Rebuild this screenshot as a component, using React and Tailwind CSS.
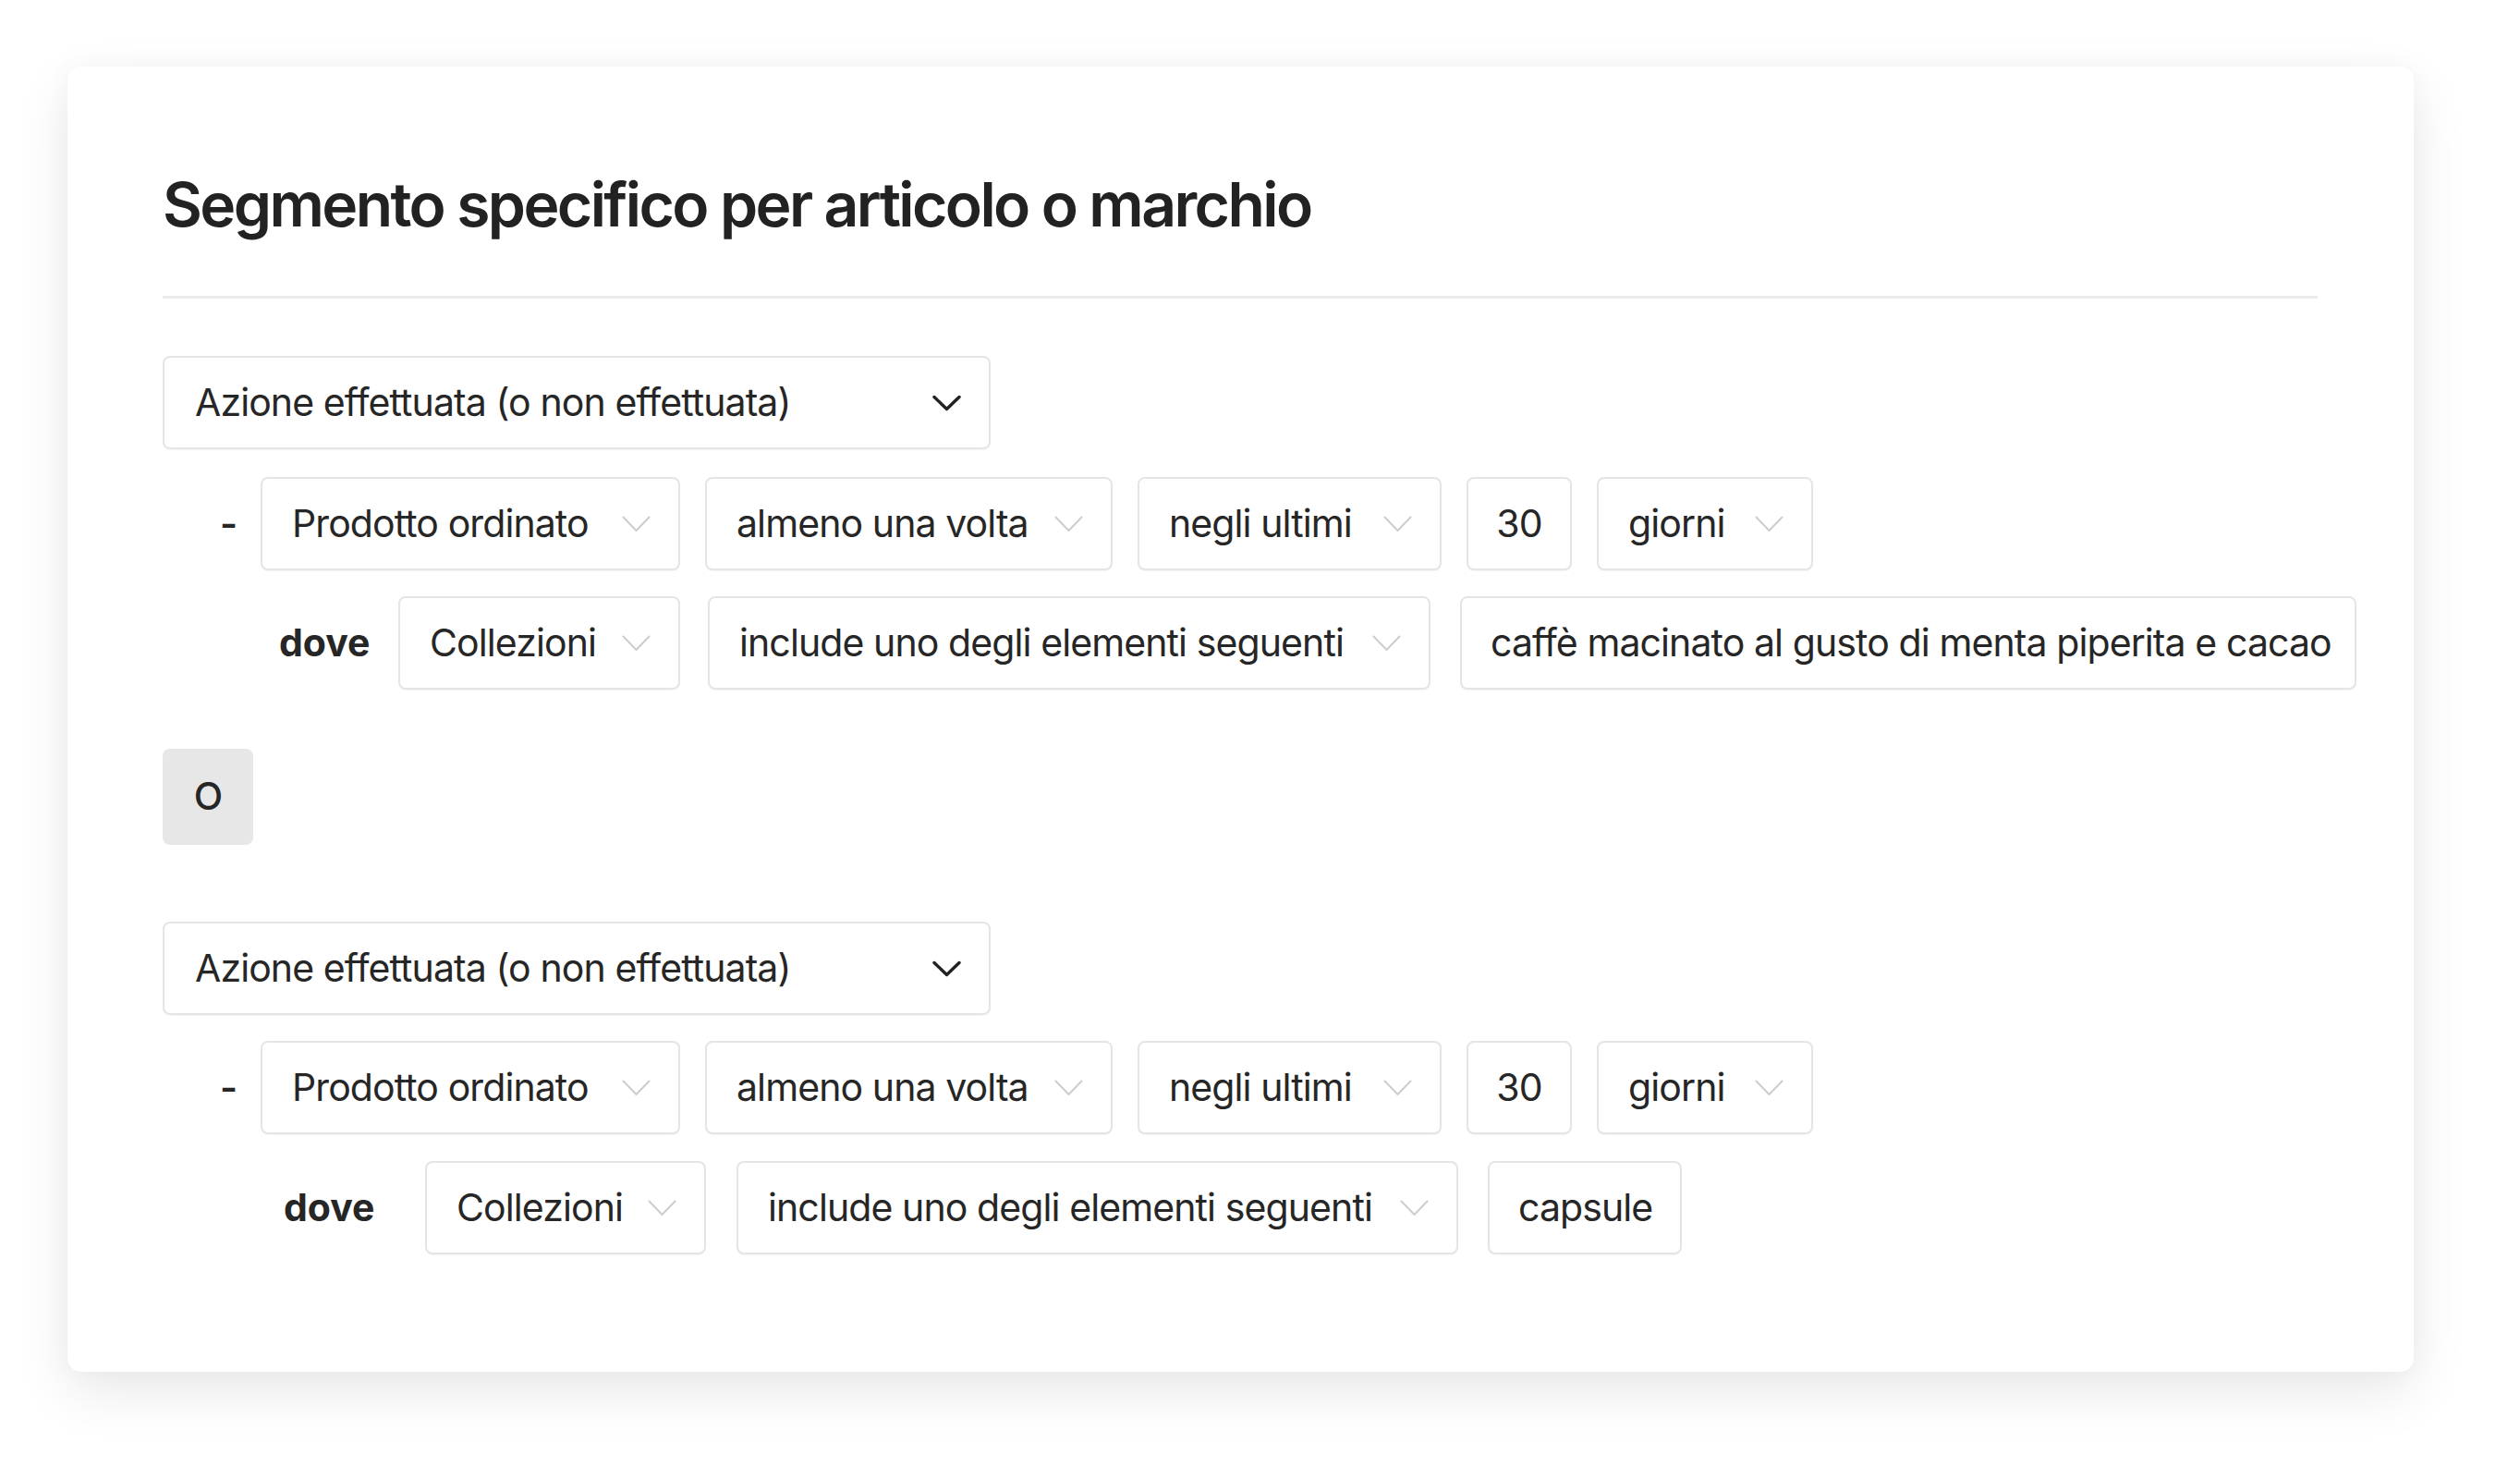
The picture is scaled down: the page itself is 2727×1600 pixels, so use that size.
import React from "react";

const field =
  "h-[101px] shrink-0 flex items-center bg-white border-2 border-[#e5e5e5] rounded-[8px] shadow-[0_1px_1px_rgba(0,0,0,0.04)]";

function Chevron({ dark }) {
  return dark ? (
    <svg width="31" height="18" viewBox="0 0 31 18" fill="none" className="shrink-0">
      <path d="M2 2.5 L15.5 15.5 L29 2.5" stroke="#222" strokeWidth="3.4" strokeLinecap="round" strokeLinejoin="round" />
    </svg>
  ) : (
    <svg width="31" height="18" viewBox="0 0 31 18" fill="none" className="shrink-0">
      <path d="M1.5 1.5 L15.5 16 L29.5 1.5" stroke="#cdcdcd" strokeWidth="2" strokeLinecap="round" strokeLinejoin="round" />
    </svg>
  );
}

function Select({ label, w }) {
  return (
    <div className={`${field} ${w} justify-between pl-[32px] pr-[30px]`}>
      <span className="whitespace-nowrap">{label}</span>
      <Chevron />
    </div>
  );
}

function Value({ label, w, center }) {
  return (
    <div className={`${field} ${w} ${center ? "justify-center" : "pl-[31px]"}`}>
      <span className="whitespace-nowrap">{label}</span>
    </div>
  );
}

function ActionSelect() {
  return (
    <div className={`${field} w-[896px] justify-between pl-[33px] pr-[30px]`}>
      <span className="whitespace-nowrap">Azione effettuata (o non effettuata)</span>
      <Chevron dark />
    </div>
  );
}

function EventRow({ className }) {
  return (
    <div className={`flex items-center ${className}`}>
      <div className="w-[106px] shrink-0 pl-[62px] font-semibold">-</div>
      <div className="flex items-center gap-[27px]">
        <Select label="Prodotto ordinato" w="w-[454px]" />
        <Select label="almeno una volta" w="w-[441px]" />
        <Select label="negli ultimi" w="w-[329px]" />
        <Value label="30" w="w-[114px]" center />
        <Select label="giorni" w="w-[234px]" />
      </div>
    </div>
  );
}

export default function App() {
  return (
    <div className="min-h-[1600px] w-[2727px] bg-white pt-[72px] pl-[73px] font-['Inter',_'Noto_Sans',_sans-serif] text-[41px] tracking-[-0.9px] text-[#262626]">
      <div className="w-[2539px] h-[1412px] bg-white rounded-[15px] shadow-[0_22px_60px_rgba(0,0,0,0.09),0_0_30px_rgba(0,0,0,0.03)] pl-[103px] pt-[116px]">
        <h1 className="text-[66px] leading-none font-semibold text-[#222] tracking-[-2.6px]">
          Segmento specifico per articolo o marchio
        </h1>
        <div className="mt-[66px] h-[3px] w-[2332px] bg-[#ebebeb]" />

        <div className="mt-[62px]">
          <ActionSelect />
        </div>
        <EventRow className="mt-[30px]" />
        <div className="mt-[28px] flex items-center">
          <div className="w-[255px] shrink-0 pl-[126px] font-bold tracking-normal">dove</div>
          <Select label="Collezioni" w="w-[305px]" />
          <div className="ml-[30px]">
            <Select label="include uno degli elementi seguenti" w="w-[782px]" />
          </div>
          <div className="ml-[32px]">
            <Value label="caffè macinato al gusto di menta piperita e cacao" w="w-[970px]" />
          </div>
        </div>

        <div className="mt-[64px] w-[98px] h-[104px] rounded-[8px] bg-[#e7e7e7] flex items-center justify-center font-medium">
          O
        </div>

        <div className="mt-[83px]">
          <ActionSelect />
        </div>
        <EventRow className="mt-[28px]" />
        <div className="mt-[29px] flex items-center">
          <div className="w-[284px] shrink-0 pl-[131px] font-bold tracking-normal">dove</div>
          <Select label="Collezioni" w="w-[304px]" />
          <div className="ml-[33px]">
            <Select label="include uno degli elementi seguenti" w="w-[781px]" />
          </div>
          <div className="ml-[32px]">
            <Value label="capsule" w="w-[210px]" />
          </div>
        </div>
      </div>
    </div>
  );
}
